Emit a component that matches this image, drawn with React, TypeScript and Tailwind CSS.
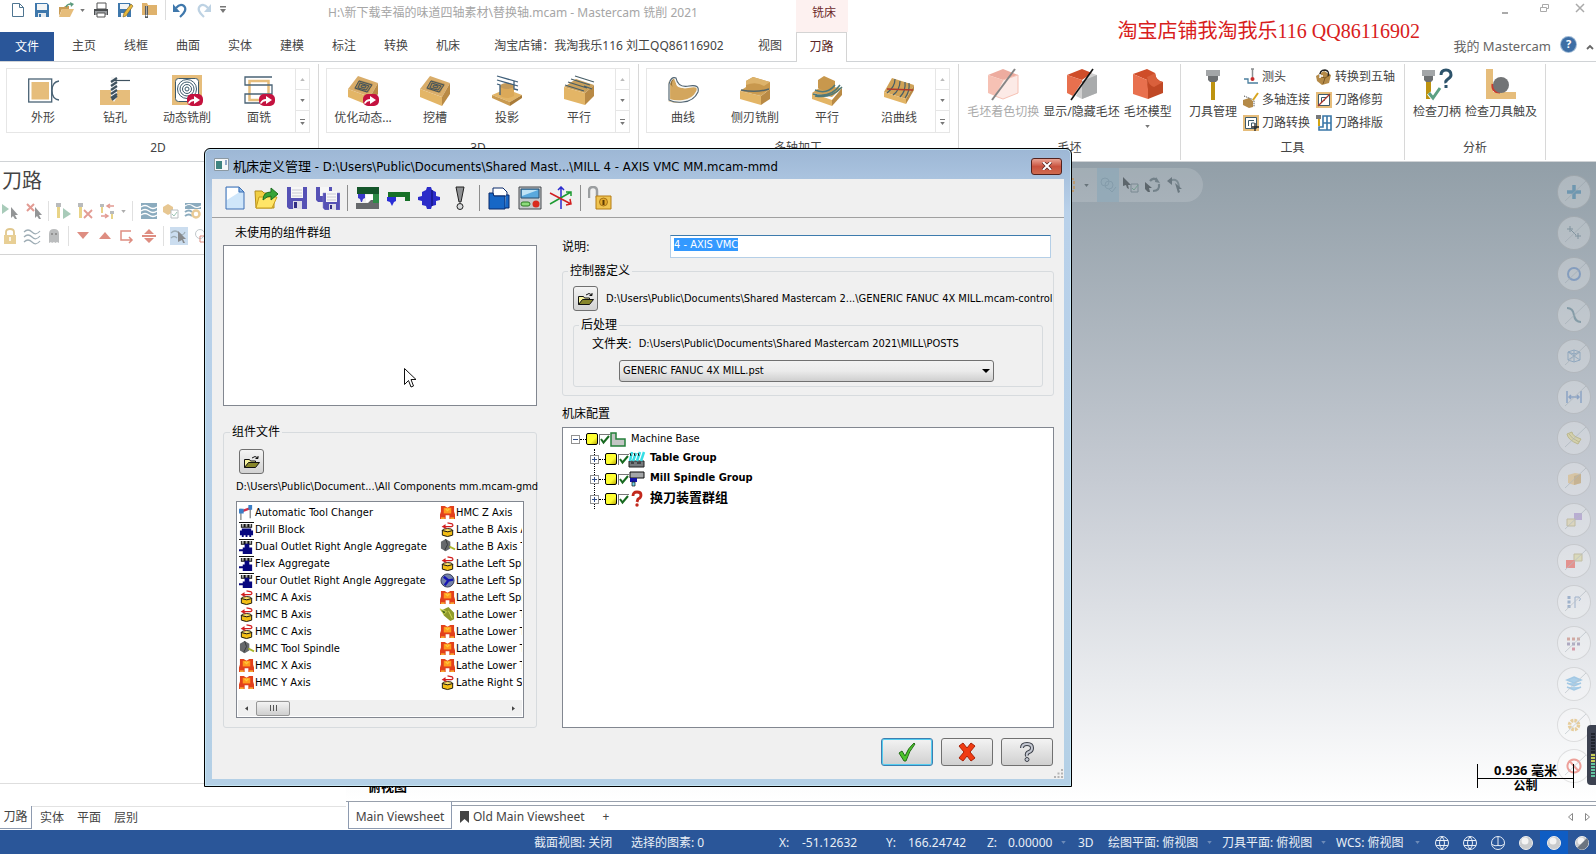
import { useEffect, useRef, useState } from "react";
import type { ReactNode } from "react";

type IconProps = { name: string; className?: string };

const redArrow = (
  <g>
    <rect x="15" y="19" width="16" height="12" rx="5" fill="#c4123f" />
    <path d="M16 28q2-4 6-4v-3l6 4-6 4v-3q-3 0-5 3z" fill="#fff" />
  </g>
);

const pocket = (
  <g>
    <path d="M10 1 30 8 22 22 0 14z" fill="#d9ad6a" />
    <path d="M0 14 22 22v9L0 22z" fill="#e3b566" />
    <path d="M22 22 30 8v11l-8 12z" fill="#b98a45" />
    <path d="M11 5 25 9l-5 9L6 14z" fill="#a8874f" />
    <g fill="none" stroke="#44545c">
      <path d="M11 6 24 10l-5 7L7 13z" />
      <path d="m12 8 9 3-3 4-8-2z" />
      <path d="m14 10 4 1-1 2-4-1z" />
    </g>
  </g>
);

// 30 x 30 drawings used by the ribbon
const largeIcons: Record<string, ReactNode> = {
  contour: (
    <g fill="none" stroke="#4a6375" strokeWidth="1.3">
      <rect x="0.7" y="4" width="23" height="23" />
      <rect x="3.5" y="7" width="17.5" height="17.5" fill="#e6bd7b" stroke="none" />
      <path d="M31 6q-7 1-7 9.5t7 9.5" />
    </g>
  ),
  drill: (
    <g>
      <path d="M0 15h30v15H0z" fill="#e6bd7b" />
      <path d="M11 2h6v20l-3 5-3-5z" fill="#f4f4f4" />
      <path d="m11 7 6-4m-6 8 6-4m-6 8 6-4m-6 8 6-4m-6 8 6-4M12 25l5-4" stroke="#3f5260" strokeWidth="2.2" />
      <path d="M14 5.5h16" stroke="#3f5260" strokeWidth="1.2" />
    </g>
  ),
  dynamic: (
    <g>
      <path d="M0 0h30v30H0z" fill="#e6bd7b" />
      <rect x="3.5" y="3.5" width="23" height="23" rx="3" fill="#fff" />
      <g fill="none" stroke="#3d5a6b">
        <circle cx="15" cy="14" r="2" />
        <circle cx="15" cy="14" r="4.5" />
        <circle cx="15" cy="14" r="7" />
        <circle cx="15" cy="14" r="9.5" />
        <rect x="3.5" y="3.5" width="23" height="23" rx="3" />
      </g>
      {redArrow}
    </g>
  ),
  face: (
    <g fill="none">
      <rect x="5.5" y="6" width="19" height="19" stroke="#e6bd7b" strokeWidth="2.5" />
      <path d="M28 2H1v8h27v9H1v9h15" stroke="#4a6375" strokeWidth="1.3" />
      {redArrow}
    </g>
  ),
  optirough: (
    <g>
      {pocket}
      {redArrow}
    </g>
  ),
  pocket,
  project: (
    <g>
      <path d="m0 20 14-6 16 6-12 7z" fill="#e3b566" />
      <path d="m0 20 18 7v4L0 23z" fill="#c99a50" />
      <path d="m18 27 12-7v3l-12 8z" fill="#a97b38" />
      <path d="M8 11q7-4 14 0v10q-7 4-14 0z" fill="#dba959" />
      <ellipse cx="15" cy="11" rx="7" ry="3" fill="#c39a5a" />
      <path d="m5 1 21 6M5 5l21 6M5 9l3 1v10m18-5-4-1V6" fill="none" stroke="#3f5f7a" strokeWidth="1.3" />
    </g>
  ),
  parallel: (
    <g>
      <path d="m0 12 12-8 18 6-9 8z" fill="#c9a05b" />
      <path d="m0 12 21 6v12L0 24z" fill="#e3b566" />
      <path d="m21 18 9-8v11l-9 9z" fill="#b98a45" />
      <path d="m1 10 19 6m-16-9 19 6m-16-9 19 6m-15-9 19 6m-10 4 8 3" stroke="#475e68" strokeWidth="1.2" />
    </g>
  ),
  curve: (
    <g>
      <path d="M0 8Q5-1 8 6q-1 9 11 6l9-1q4 9-8 14-11 5-20 1z" fill="#d3a65d" />
      <path d="M1 8Q2 2 7 3q-5 4-2 9z" fill="#94723a" />
      <path d="M1 9Q3 2 7 3q3 11 13 9 13-3 9 5-4 8-14 9-7 1-14-1z" fill="none" stroke="#f8f8f4" strokeWidth="2.2" />
      <path d="M1 9Q3 1 8 3q2 10 13 8 11-2 9 6-4 9-15 10-8 1-14-2z" fill="none" stroke="#4d6170" strokeWidth="1.1" />
    </g>
  ),
  swarf: (
    <g>
      <path d="m0 16 21 5v9L0 24z" fill="#e3b566" />
      <path d="m21 21 9-7v10l-9 6z" fill="#b98a45" />
      <path d="m0 16 6-4 24 2-9 7z" fill="#d0a257" />
      <path d="m6 6 7-4 17 5v7q-14 9-24 1z" fill="#c8984d" />
      <path d="m6 6 7-4 17 5-6 4Q16 6 6 10z" fill="#ddb36b" />
      <path d="M1 15q16 3 28-1" fill="none" stroke="#53656a" strokeWidth="1.5" />
    </g>
  ),
  multiparallel: (
    <g>
      <path d="m0 18 10-7 20 2-10 9z" fill="#d0a257" />
      <path d="m0 18 20 7v6L0 24z" fill="#e3b566" />
      <path d="m20 25 10-12v7L20 31z" fill="#b98a45" />
      <path d="m6 5 6-4 11 5v7q-8 5-17 0z" fill="#c8984d" />
      <path d="M3 15q12 5 20-5m-22 9q17 5 27-9m-25 11q16 3 27-9" fill="none" stroke="#4e7878" strokeWidth="1.5" />
    </g>
  ),
  alongcurve: (
    <g>
      <path d="M8 3 30 10 22 24 0 17z" fill="#d0a257" />
      <path d="m0 17 22 7v5L0 22z" fill="#e3b566" />
      <path d="m22 24 8-14v5l-8 14z" fill="#b98a45" />
      <path d="M11 4q0 8-8 14m13-12q0 9-7 14M21 7q1 9-5 15m9-14q1 8-4 15" fill="none" stroke="#475e68" strokeWidth="1.2" />
      <path d="m3 14 26 1" stroke="#b0392b" strokeWidth="1.3" />
    </g>
  ),
  shading: (
    <g opacity="0.55">
      <path d="M0 6 15 0l15 6-15 5z" fill="#df6a52" />
      <path d="M0 6v18l7 3 8-14V11z" fill="#f08f78" />
      <path d="m15 11 15-5v18l-15 6-8-3z" fill="#fbdad2" stroke="#f08f78" />
      <path d="M27 0 4 31" stroke="#222" strokeWidth="2" />
    </g>
  ),
  showstock: (
    <g>
      <path d="M0 6 15 0l10 4-10 7z" fill="#cf4d29" />
      <path d="M0 6v18l6 3 9-14V11z" fill="#e8704e" />
      <path d="m16 13 8-9 6 2v18l-15 6-6-3z" fill="#d0d0d0" />
      <path d="m15 12 15-6v18l-15 6z" fill="#a9abac" />
      <path d="M26 0 4 31" stroke="#111" strokeWidth="1.6" />
    </g>
  ),
  stockmodel: (
    <g>
      <path d="m0 5 14-5 8 4-8 7z" fill="#cf4d29" />
      <path d="m0 5 14 6q1 8 6 9l-5 10L0 25z" fill="#e8704e" />
      <path d="M14 8 22 4q1 8 8 9v11l-15 6V20q-1-4-1-12z" fill="#c04825" />
      <path d="m14 8 8-4q1 8 8 9l-9 5q-6-2-7-10z" fill="#d9603c" />
    </g>
  ),
  toolmanager: (
    <g>
      <path d="M8 1h14v6H8z" fill="#a3a6a8" />
      <path d="M10 7h10v4l-2 2h-6l-2-2z" fill="#6d7072" />
      <path d="M13 13h4v18h-4z" fill="#bd9310" />
    </g>
  ),
  checkholder: (
    <g>
      <path d="M0 1h13v6H0z" fill="#a3a6a8" />
      <path d="M2 7h9v4l-2 2H4l-2-2z" fill="#6d7072" />
      <path d="M4 13h5v17H4z" fill="#bd9310" />
      <path d="m7 24 4 5 7-10" fill="none" stroke="#fff" strokeWidth="5" />
      <path d="m7 24 4 5 7-10" fill="none" stroke="#5ba183" strokeWidth="3" />
      <path d="M19 6q0-5 5-5t5 5q0 2-3 4t-2 4m0 2v3" fill="none" stroke="#2d536b" strokeWidth="3" />
    </g>
  ),
  checkreach: (
    <g>
      <path d="M0 0h7v23h23v7H0z" fill="#e6bd7b" />
      <path d="M7 15q-1 8 7 8" fill="none" stroke="#c83b30" strokeWidth="3" />
      <circle cx="15" cy="16" r="8" fill="#727476" />
    </g>
  ),
};

// 16 x 16 drawings shared by the toolbars
const smallIcons: Record<string, ReactNode> = {
  new: <path d="M2.5 1.5h7l4 4v9h-11zM9.5 1.5v4h4" fill="#fff" stroke="#4f7591" />,
  save: (
    <g>
      <path d="M1 1h12l2 2v12H1z" fill="#3f78ac" />
      <path d="M3 2h10v6H3z" fill="#f3f5f6" />
      <path d="M4 11h8v4H4z" fill="#e8ecef" />
      <path d="M5 12h2v3H5z" fill="#3f78ac" />
    </g>
  ),
  open: (
    <g>
      <path d="M1 5h5l1-1h4v3h-7L1 14z" fill="#c99c55" />
      <path d="M4 7h12l-4 8H1z" fill="#e6bd7b" />
      <path d="M8 5q1-3 5-3" fill="none" stroke="#5b9a7d" strokeWidth="1.5" />
      <path d="m12 0 4 2-3 3z" fill="#5b9a7d" />
    </g>
  ),
  print: (
    <g>
      <path d="M4 1h9v6H4z" fill="#fff" stroke="#555" />
      <path d="M1 7h14v6H1z" fill="#4b4e50" />
      <path d="M2 9h12v4H2z" fill="#9a9da0" />
      <path d="M4 11h8v4H4z" fill="#fff" stroke="#555" />
    </g>
  ),
  saveas: (
    <g>
      <path d="M1 1h12l1 2v12H1z" fill="#3f78ac" />
      <path d="M3 2h9v5H3zM4 11h6v4H4z" fill="#f3f5f6" />
      <path d="m14 2 2 2-7 10-3 1 1-4z" fill="#e8b83c" stroke="#76602a" strokeWidth="0.6" />
    </g>
  ),
  zip: (
    <g>
      <path d="M1 1h5l1 2h9v10H1z" fill="#dfb26c" />
      <path d="M4 4h3v12H4z" fill="#55595c" />
      <path d="M5 5h1m-1 2h1m-1 2h1m-1 2h1" stroke="#fff" />
      <circle cx="5.5" cy="13.5" r="1" fill="#fff" />
    </g>
  ),
  undo: (
    <g>
      <path d="M4 6q4-5 8-2 4 4-4 11" fill="none" stroke="#3f78ac" strokeWidth="2.2" />
      <path d="M1 2v8h7z" fill="#3f78ac" />
    </g>
  ),
  redo: (
    <g opacity="0.45">
      <path d="M12 6Q8 1 4 4q-4 4 4 11" fill="none" stroke="#6f9cc2" strokeWidth="2.2" />
      <path d="M15 2v8H8z" fill="#6f9cc2" />
    </g>
  ),
  probe: (
    <g>
      <path d="M8 0h3M9.5 0v8" stroke="#8b8e90" strokeWidth="1.5" />
      <circle cx="9.5" cy="10" r="2" fill="#c62c2c" />
      <path d="M1 10h4v4h10" fill="none" stroke="#4b7f9f" strokeWidth="1.3" />
    </g>
  ),
  link: (
    <g>
      <path d="m0 8 6-2 4 3v6l-4 1-6-3z" fill="#b48a48" />
      <path d="m1 4 10 4v7" fill="none" stroke="#333" strokeDasharray="1 1" />
      <path d="m10 8 5-7" stroke="#d9a61f" strokeWidth="2" />
    </g>
  ),
  transform: (
    <g>
      <path d="M0 0h16v16H0z" fill="#e6bd7b" />
      <path d="M2.5 2.5h11v11h-11z" fill="#fff" stroke="#3d5a6b" />
      <path d="M11 5.5H5.5V11M8.5 11V8h3" fill="none" stroke="#3d5a6b" />
      <path d="M12 8v8M8 12h8" stroke="#222" strokeWidth="1.3" />
    </g>
  ),
  fiveaxis: (
    <g>
      <path d="m0 7 8-5 7 4-2 8-7 2-5-4z" fill="#b48a48" />
      <path d="m3 7 6 2 5-3M9 9l-2 6" fill="none" stroke="#7c5a25" />
      <path d="M4 8Q3 1 9 1q5 1 3 6" fill="none" stroke="#222" strokeWidth="1.3" />
      <path d="M4 5v4m0-2h3" stroke="#fff" strokeWidth="1.5" />
    </g>
  ),
  trim: (
    <g>
      <path d="M0 0h16v16H0z" fill="#e6bd7b" />
      <path d="M2.5 2.5h11v11h-11z" fill="#fff" stroke="#3d5a6b" />
      <path d="M5.5 11V5.5H11M8 9V8h1" fill="none" stroke="#3d5a6b" />
      <path d="m14 2-12 12" stroke="#a8352b" strokeWidth="1.3" />
    </g>
  ),
  nest: (
    <g>
      <path d="M0 0h5v4H0z" fill="#77797b" />
      <path d="M2 4h2v7H2z" fill="#d3a413" />
      <path d="M7 1h8v14H3v-3h4zM11 1v14M7 8h8" fill="none" stroke="#3a77a8" strokeWidth="1.6" />
    </g>
  ),
  pick: (
    <g>
      <path d="m0 1 7 5-7 5z" fill="#6fa98c" />
      <path d="m9 4 7 8-3 0 2 4-2 0-2-3-2 2z" fill="#4c4f52" />
    </g>
  ),
  unpick: (
    <g>
      <path d="m1 1 7 7m0-7-7 7" stroke="#d05a4c" strokeWidth="2" />
      <path d="m9 4 7 8-3 0 2 4-2 0-2-3-2 2z" fill="#4c4f52" />
    </g>
  ),
  regen: (
    <g>
      <path d="M1 0h5v4H1z" fill="#8b8e90" />
      <path d="M2 4h3v11H2z" fill="#dcb838" />
      <path d="m8 5 8 6-8 5z" fill="#6fa98c" />
    </g>
  ),
  regenx: (
    <g>
      <path d="M1 0h5v4H1z" fill="#8b8e90" />
      <path d="M2 4h3v11H2z" fill="#dcb838" />
      <path d="m7 7 8 8m0-8-8 8" stroke="#d05a4c" strokeWidth="1.8" />
    </g>
  ),
  swap: (
    <g>
      <path d="M1 1h4v3H1zM11 8h4v3h-4z" fill="#8b8e90" />
      <path d="M2 4h2v6H2zM12 11h2v5h-2z" fill="#dcb838" />
      <path d="M15 3H8m3-2L8 3l3 2M2 13h7m-3-2 3 2-3 2" fill="none" stroke="#d05a4c" strokeWidth="1.5" />
    </g>
  ),
  waves: (
    <g>
      <path d="M0 0h16v16H0z" fill="#3f7494" />
      <path d="M0 4q4-3 8 0t8 0M0 8q4-3 8 0t8 0M0 12q4-3 8 0t8 0" fill="none" stroke="#fff" strokeWidth="1.4" />
    </g>
  ),
  verify: (
    <g>
      <path d="m0 4 5-3 5 3v5l-5 3-5-3z" fill="#d8a34a" />
      <path d="M8 7h7v8H8z" fill="#fff" stroke="#8c9498" />
      <path d="m9 11 2 2 3-4" fill="none" stroke="#5ba183" />
    </g>
  ),
  post: (
    <g>
      <path d="M0 0h16v6H0z" fill="#3f7494" />
      <path d="M0 3q4-3 8 0t8 0" fill="none" stroke="#fff" strokeWidth="1.2" />
      <path d="M0 9q4-3 7 0M0 13q4-3 7 0" fill="none" stroke="#3f7494" strokeWidth="2" />
      <circle cx="11" cy="11" r="3.5" fill="none" stroke="#dba953" strokeWidth="2.5" />
    </g>
  ),
  lock: (
    <g>
      <path d="M4 8V4q0-3 4-3t4 3v4" fill="none" stroke="#cda343" strokeWidth="1.8" />
      <path d="M2 7h12v9H2z" fill="#d9b04f" />
      <path d="M8 9v4" stroke="#fff" strokeWidth="1.6" />
    </g>
  ),
  wavelines: <path d="M0 4q4-4 8 0t8-1M0 9q4-4 8 0t8-1M0 14q4-4 8 0t8-1" fill="none" stroke="#5e7684" strokeWidth="1.2" />,
  ghost: (
    <g>
      <path d="M3 15V6q0-5 5-5t5 5v9l-2-1-1.5 1L8 14l-2 1-1-1z" fill="#8f9294" />
      <circle cx="6" cy="6" r="1" fill="#333" />
      <circle cx="10" cy="6" r="1" fill="#333" />
    </g>
  ),
  down: <path d="M2 4h12l-6 7z" fill="#c9432f" />,
  up: <path d="m8 4 6 7H2z" fill="#c9432f" />,
  insert: <path d="M12 3H2v9h11m-3-3 3 3-3 3" fill="none" stroke="#c9432f" strokeWidth="1.5" />,
  center: <path d="m8 1 5 5H3zM1 7h14v2H1zm2 3h10l-5 5z" fill="#c9432f" />,
  display: (
    <g>
      <path d="M0 5q4-4 8 0t6-1M0 10q3-3 6 0" fill="none" stroke="#5e7684" strokeWidth="1.2" />
      <path d="m7 3 8 8-3 0 2 4-2 0-1-3-4 2z" fill="#3a3d40" />
    </g>
  ),
  shape: (
    <g fill="none">
      <circle cx="6" cy="6" r="4.5" stroke="#9aa5ab" />
      <path d="M6 8h8v6H6z" stroke="#c9432f" />
    </g>
  ),
  marquee: <path d="M1 2h13v12H1z" fill="none" stroke="#c79a62" strokeWidth="2" strokeDasharray="3 2" />,
  solids: (
    <g fill="none" stroke="#7f9bab">
      <circle cx="5" cy="5" r="4" />
      <circle cx="9" cy="8" r="4" />
      <path d="m9 12 3 3 4-5" />
    </g>
  ),
  validate: (
    <g>
      <path d="m0 0 8 8H5l1 4-2-1-1-3-3 1z" fill="#4a5358" />
      <path d="M8 7h7v8H8z" fill="none" stroke="#71808a" />
      <path d="m9 11 2 2 4-5" fill="none" stroke="#6b9b88" />
    </g>
  ),
  cycle: (
    <g>
      <path d="M5 4q3-4 7-1m2 4q1 7-6 7" fill="none" stroke="#68777f" strokeWidth="2.2" />
      <path d="m11 0 4 6-5-1z" fill="#68777f" />
      <path d="m0 5 7 6H4l1 4H3l-3-3z" fill="#4a5358" />
    </g>
  ),
  back: (
    <g>
      <path d="M3 4q8-4 9 6" fill="none" stroke="#74848c" strokeWidth="2" />
      <path d="M5 0v8L0 4zM8 6l7 6-3 0 1 3-2 1z" fill="#5c6a72" />
    </g>
  ),
};

// 24 x 24 drawings of the dialog toolbar
const dialogIcons: Record<string, ReactNode> = {
  page: (
    <g>
      <path d="M3 1h13l5 5v17H3z" fill="#cfe6fa" stroke="#3c6fb4" />
      <path d="M4 2h11v5L4 14z" fill="#fff" />
      <path d="M16 1v5h5z" fill="#8db9e8" stroke="#3c6fb4" />
    </g>
  ),
  folder: (
    <g>
      <path d="M1 5h7l2 2h10v15H2z" fill="#f1cf43" stroke="#b48d1b" />
      <path d="M5 11h18l-5 11H2z" fill="#ffe567" stroke="#c89d1c" />
      <path d="M9 14q0-8 8-8V2l7 6-7 6v-4q-4 0-8 4z" fill="#37a437" stroke="#1a6d1e" />
    </g>
  ),
  disk: (
    <g>
      <path d="M2 1h20v22H4l-2-2z" fill="#5551b5" />
      <path d="M6 1h12v11H6z" fill="#f7f7f7" />
      <path d="M7 4h10M7 7h10M7 10h10" stroke="#c9c9d4" />
      <path d="M8 15h9v8H8z" fill="#dcdce8" />
      <path d="M9 16h3v6H9z" fill="#312d85" />
    </g>
  ),
  disks: (
    <g>
      <path d="M0 1h16v15H2l-2-2z" fill="#5551b5" />
      <path d="M4 1h9v9H4z" fill="#f7f7f7" />
      <path d="M7 7h17v17H9l-2-2z" fill="#5551b5" stroke="#8885d2" strokeWidth="0.5" />
      <path d="M10 5h11v11H10z" fill="#f7f7f7" />
      <path d="M11 8h9m-9 3h9m-9 3h9" stroke="#c9c9d4" />
      <path d="M13 18h7v6h-7z" fill="#dcdce8" />
      <path d="M14 19h2v4h-2z" fill="#312d85" />
    </g>
  ),
  mill: (
    <g>
      <path d="M2 1h22v16h-6V8H2z" fill="#14562a" />
      <path d="M18 8h6v9h-6z" fill="#2c8a45" />
      <path d="M3 8h7v4l-2 1-1 3H6l-1-3-2-1z" fill="#3a39c9" />
      <path d="M1 17h12l3-3h2v3h6v6H1z" fill="#66696b" />
      <path d="M11 9h7v5h-3l-2 2h-2z" fill="#fff" />
    </g>
  ),
  head: (
    <g>
      <path d="M2 6h22v9h-5v-4H2z" fill="#167027" />
      <path d="M1 11h9v4l-2 1-2 4-2-4-3-1z" fill="#2a2ed6" />
    </g>
  ),
  spindle: (
    <g>
      <path d="M10 1h4l1 3 4 2v4l4 1v3l-4 1v4l-4 1-1 3h-4l-1-3-4-1v-4l-4-1v-3l4-1V6l4-2z" fill="#2b2cc9" />
      <path d="M15 4v16" stroke="#171788" strokeWidth="1.5" />
    </g>
  ),
  exclaim: (
    <g fill="#8f9193" stroke="#222">
      <path d="M8 1h8l-3 15h-2z" />
      <circle cx="12" cy="20.5" r="3" fill="#d8dadb" />
    </g>
  ),
  tools: (
    <g>
      <path d="M6 2h10l4 4v4H6z" fill="#fff" stroke="#0b2a6b" />
      <path d="M2 7h4l1 3h11v13H2z" fill="#1767c6" stroke="#0b2a6b" />
      <path d="M19 9h3v13h-4" fill="#1767c6" stroke="#0b2a6b" />
    </g>
  ),
  control: (
    <g>
      <path d="M1 1h22v22H1z" fill="#c6c9cc" stroke="#44484c" />
      <path d="M3 3h18v9H3z" fill="#5aa9dd" stroke="#274c6d" />
      <path d="M4 4h16L4 10z" fill="#bfe3f5" />
      <rect x="3" y="16" width="9" height="4" rx="2" fill="#8ddc7c" stroke="#2e7a24" />
      <circle cx="18" cy="18" r="3.5" fill="#d92a1c" />
    </g>
  ),
  axes: (
    <g fill="none" strokeWidth="1.5">
      <path d="M12 23V1M9 4l3-3 3 3" stroke="#2b2ccf" />
      <path d="M1 18 22 6m-5 0h5v4" stroke="#1d9a32" />
      <path d="m1 7 21 11m-5 1 5-1-1-5" stroke="#d22020" />
    </g>
  ),
  unlock: (
    <g>
      <path d="M1 12V5q0-4 4-4t4 4v7" fill="none" stroke="#9b9ea0" strokeWidth="2.5" />
      <path d="M8 10h15v13H8z" fill="#f0c552" stroke="#b57c15" />
      <circle cx="15.5" cy="16" r="4" fill="#e2a92c" stroke="#a8741a" />
      <path d="M15.5 14v5" stroke="#5b3a05" strokeWidth="2" />
    </g>
  ),
};

// 16 x 16 drawings of the component list and the machine tree
const partIcons: Record<string, ReactNode> = {
  changer: (
    <g>
      <path d="M2 4v12M12 3v11" stroke="#8b8e90" strokeWidth="1.5" />
      <path d="m2 7 11-4" stroke="#d12f4a" strokeWidth="2.5" />
      <path d="M0 4h5v5H0zM10 0h4v5h-4z" fill="#3c7fc7" />
    </g>
  ),
  block: (
    <g>
      <path d="M0 0h16v1H0zM2 2h12v4H2z" fill="#111" />
      <path d="M3 2h2v3H3zm4 0h2v3H7zm4 0h2v3h-2z" fill="#aaa" />
      <path d="M3 7h10v2h2v5h-2v2h-2v-2H9v2H7v-2H5v2H3v-2H1V9h2z" fill="#06067e" />
    </g>
  ),
  aggregate: (
    <g>
      <path d="M0 0h16v1H0zM2 2h12v4H2z" fill="#111" />
      <path d="M3 2h2v3H3zm4 0h2v3H7zm4 0h2v3h-2z" fill="#aaa" />
      <path d="M6 5h5v4h3v7H4v-3H0v-2h4V9h2z" fill="#06067e" />
    </g>
  ),
  rotary: (
    <g>
      <ellipse cx="8" cy="9" rx="5.5" ry="2" fill="#ffe36a" stroke="#111" />
      <path d="M2.5 9v5q5.5 3 11 0V9q-5 3-11 0z" fill="#f2bd15" stroke="#111" />
      <path d="M4 5h8q3-1 1-3L8 1M6 3 3 5l4 2" fill="none" stroke="#d21e1e" strokeWidth="1.3" />
    </g>
  ),
  toolspindle: (
    <g>
      <path d="m1 3 5-3 5 3v7l-5 3-5-3z" fill="#66696c" />
      <path d="m6 0 2 6-3 6" fill="none" stroke="#34373a" />
      <path d="m10 8 6 3" stroke="#a9b62a" strokeWidth="2" />
    </g>
  ),
  linear: (
    <g>
      <path d="M1 1h4l3 2 3-2h4v6l1 3v5h-6v-4H6v4H0v-5l1-3z" fill="#e2401c" />
      <path d="M4 3h8v6H4z" fill="#ff9a1e" />
      <path d="m6 4 2 2 2-2M1 14h4m6 0h4" stroke="#ffc93a" strokeWidth="1.5" fill="none" />
    </g>
  ),
  chuck: (
    <g>
      <circle cx="8" cy="8" r="7" fill="#7381a8" stroke="#333a52" />
      <path d="m4 4 5 4 5-1M9 8l-4 5" stroke="#1414b4" strokeWidth="2.5" fill="none" />
    </g>
  ),
  turret: (
    <g>
      <path d="m3 3 6-3 6 6v7l-4 2-7-6z" fill="#8e9a2a" />
      <path d="m0 2 7 3-3 3zM9 4l4 8" fill="#4f6d22" stroke="#d6dd53" />
    </g>
  ),
  base: <path d="M1 2h5v6h9v7H1z" fill="#c3c6c4" stroke="#25803a" strokeWidth="1.5" />,
  table: (
    <g>
      <path d="M0 10h15v6H0z" fill="#777b7e" stroke="#222" />
      <path d="m3 1-2 9m6-8-3 8m7-9-3 9m7-9-3 9" stroke="#37dfe6" strokeWidth="2.5" />
      <path d="m1 2 1 3m3-3 1 3m3-3 1 3M2 12h3m3 0h4" stroke="#111" />
    </g>
  ),
  millhead: (
    <g>
      <path d="M1 1h14v6H1z" fill="#a4a6a8" stroke="#111" />
      <path d="M1 7h7v4H1z" fill="#1414a8" />
      <path d="M3 11h3v4H3z" fill="#6fd3ea" stroke="#111" strokeWidth="0.7" />
    </g>
  ),
  question: (
    <g>
      <path d="M4 5q0-4 4-4t4 3q0 3-3 4l-1 3" fill="none" stroke="#c2281c" strokeWidth="2.8" />
      <circle cx="8" cy="14" r="1.7" fill="#c2281c" />
    </g>
  ),
};

function LargeIcon({ name, className = "size-[30px]" }: IconProps) {
  return <svg viewBox="0 0 30 30" className={`overflow-visible ${className}`}>{largeIcons[name]}</svg>;
}

function SmallIcon({ name, className = "size-4" }: IconProps) {
  return <svg viewBox="0 0 16 16" className={`shrink-0 overflow-visible ${className}`}>{smallIcons[name] ?? partIcons[name]}</svg>;
}

function Caret({ className = "" }: { className?: string }) {
  return (
    <svg viewBox="0 0 6 4" className={`h-[3px] w-[5px] shrink-0 ${className}`}>
      <path d="M0 0h6L3 4z" fill="currentColor" />
    </svg>
  );
}

const tabs = ["主页", "线框", "曲面", "实体", "建模", "标注", "转换", "机床"];

const galleries = [
  { title: "2D", items: [["contour", "外形"], ["drill", "钻孔"], ["dynamic", "动态铣削"], ["face", "面铣"]] },
  { title: "3D", items: [["optirough", "优化动态..."], ["pocket", "挖槽"], ["project", "投影"], ["parallel", "平行"]] },
  { title: "多轴加工", items: [["curve", "曲线"], ["swarf", "侧刃铣削"], ["multiparallel", "平行"], ["alongcurve", "沿曲线"]] },
];

const utilities = [
  ["probe", "测头"], ["link", "多轴连接"], ["transform", "刀路转换"],
  ["fiveaxis", "转换到五轴"], ["trim", "刀路修剪"], ["nest", "刀路排版"],
];

const components = [
  ["changer", "Automatic Tool Changer"],
  ["block", "Drill Block"],
  ["aggregate", "Dual Outlet Right Angle Aggregate"],
  ["aggregate", "Flex Aggregate"],
  ["aggregate", "Four Outlet Right Angle Aggregate"],
  ["rotary", "HMC A Axis"],
  ["rotary", "HMC B Axis"],
  ["rotary", "HMC C Axis"],
  ["toolspindle", "HMC Tool Spindle"],
  ["linear", "HMC X Axis"],
  ["linear", "HMC Y Axis"],
  ["linear", "HMC Z Axis"],
  ["rotary", "Lathe B Axis Attachment"],
  ["toolspindle", "Lathe B Axis Tool Spindle"],
  ["rotary", "Lathe Left Spindle C"],
  ["chuck", "Lathe Left Spindle Chuck"],
  ["linear", "Lathe Left Spindle Slide"],
  ["turret", "Lathe Lower Turret"],
  ["linear", "Lathe Lower Turret X"],
  ["linear", "Lathe Lower Turret Y"],
  ["linear", "Lathe Lower Turret Z"],
  ["rotary", "Lathe Right Spindle C"],
];

const machineGroups = [
  { icon: "table", name: "Table Group" },
  { icon: "millhead", name: "Mill Spindle Group" },
  { icon: "question", name: "换刀装置群组", size: "text-[13px]" },
];

function TitleBar() {
  return (
    <div className="flex h-8 items-start text-[#a6a6a6]">
      <div className="flex w-[328px] shrink-0 items-center pl-2.5 text-[#777]">
        <SmallIcon name="new" />
        <SmallIcon name="save" className="ml-2 size-4" />
        <SmallIcon name="open" className="ml-2 size-4" />
        <Caret className="ml-1.5" />
        <SmallIcon name="print" className="ml-2 size-4" />
        <SmallIcon name="saveas" className="ml-2 size-4" />
        <SmallIcon name="zip" className="ml-2 size-4" />
        <span className="ml-2 h-5 w-px bg-[#ddd]" />
        <SmallIcon name="undo" className="ml-1.5 size-4" />
        <SmallIcon name="redo" className="ml-2 size-4" />
        <svg viewBox="0 0 6 8" className="ml-2 h-2 w-1.5">
          <path d="M0 0h6v1.5H0zM0 3h6L3 7z" fill="currentColor" />
        </svg>
      </div>
      <h1 className="w-[468px] shrink-0 whitespace-nowrap pt-1 text-xs leading-[18px]">
        H:\新下载幸福的味道四轴素材\替换轴.mcam - Mastercam 铣削 2021
      </h1>
      <div className="h-8 w-[52px] shrink-0 bg-[#fdf1f0] pl-1 pt-1 text-center text-xs leading-[18px] text-[#6e2a2a]">铣床</div>
      <div className="ml-auto flex items-center gap-6 pr-2.5 pt-0.5">
        <button aria-label="最小化" className="flex size-3 items-end">
          <span className="h-0.5 w-1.5 bg-[#aaa]" />
        </button>
        <button aria-label="还原">
          <svg viewBox="0 0 12 12" className="size-3" fill="none" stroke="#aaa">
            <path d="M2.5 5.5h6v4h-6zM4.5 5V2.5h6v4H9" />
          </svg>
        </button>
        <button aria-label="关闭程序">
          <svg viewBox="0 0 12 12" className="size-3" stroke="#aaa" strokeWidth="1.5">
            <path d="m2 2 8 8m0-8-8 8" />
          </svg>
        </button>
      </div>
    </div>
  );
}

function TabRow() {
  return (
    <div className="flex h-[29px] text-xs text-[#444]">
      <button className="mr-1 w-[54px] bg-[#2a5699] text-white">文件</button>
      {tabs.map((tab) => (
        <button key={tab} className="w-[52px] pb-0.5">{tab}</button>
      ))}
      <button className="w-[270px] whitespace-nowrap pb-0.5">淘宝店铺：我淘我乐116 刘工QQ86116902</button>
      <button className="w-[52px] pb-0.5">视图</button>
      <button className="relative -mb-px w-[51px] border border-b-0 border-[#d4d4d4] bg-white pb-0.5 text-[#5c2626]">刀路</button>
      <div className="ml-auto flex items-center gap-2.5 pr-0.5 text-[#666]">
        <a href="#my" className="text-[13px]">我的 Mastercam</a>
        <button aria-label="帮助" className="mb-1 flex size-[15px] items-center justify-center rounded-full bg-[#3d6ea5] text-[11px] font-bold text-white ring-1 ring-[#9db8d4]">?</button>
        <svg viewBox="0 0 8 6" className="h-1.5 w-2" fill="none" stroke="#666" strokeWidth="1.8">
          <path d="m1 5 3-3 3 3" />
        </svg>
      </div>
    </div>
  );
}

function RibbonButton({ icon, label, className = "" }: { icon: string; label: string; className?: string }) {
  return (
    <button className={`flex flex-col items-center whitespace-nowrap ${className}`}>
      <LargeIcon name={icon} />
      <span className="mt-1 leading-[18px]">{label}</span>
    </button>
  );
}

function Ribbon() {
  return (
    <div className="flex h-[101px] shrink-0 border-y border-[#d0d3d6] pt-0.5 text-xs text-[#444]">
      {galleries.map((group) => (
        <section key={group.title} className="flex h-24 w-[319px] shrink-0 flex-col border-r border-[#d8d8d8] pl-1.5 pr-2 pt-1 not-first:w-[320px] not-first:pl-[7px]">
          <div className="flex h-[65px] border border-[#e6e6e6]">
            {group.items.map(([icon, label]) => (
              <RibbonButton key={label} icon={icon} label={label} className="w-[72px] pt-1.5" />
            ))}
            <div className="ml-auto grid w-[14px] grid-rows-3 divide-y divide-[#e6e6e6] border-l border-[#e6e6e6] text-[#777]">
              <button aria-label="上移" className="flex items-center justify-center"><Caret className="rotate-180 text-[#bbb]" /></button>
              <button aria-label="下移" className="flex items-center justify-center"><Caret /></button>
              <button aria-label="展开" className="flex flex-col items-center justify-center gap-0.5"><span className="h-px w-[5px] bg-[#777]" /><Caret /></button>
            </div>
          </div>
          <h2 className="mt-[7px] text-center leading-4">{group.title}</h2>
        </section>
      ))}

      <section className="flex h-24 w-[222px] shrink-0 flex-col border-r border-[#d8d8d8] pt-[5px]">
        <div className="flex h-[71px] justify-center gap-1">
          <RibbonButton icon="shading" label="毛坯着色切换" className="text-[#aaa]" />
          <RibbonButton icon="showstock" label="显示/隐藏毛坯" />
          <div className="flex flex-col items-center text-[#777]">
            <RibbonButton icon="stockmodel" label="毛坯模型" className="text-[#444]" />
            <Caret className="mt-1" />
          </div>
        </div>
        <h2 className="text-center leading-4">毛坯</h2>
      </section>

      <section className="flex h-24 w-[224px] shrink-0 flex-col border-r border-[#d8d8d8] pt-[5px]">
        <div className="flex h-[71px] gap-1.5 pl-2">
          <RibbonButton icon="toolmanager" label="刀具管理" className="h-fit" />
          <div className="-mt-1 grid h-[69px] grid-flow-col grid-rows-3 gap-x-1.5 whitespace-nowrap">
            {utilities.map(([icon, label]) => (
              <button key={label} className="flex items-center gap-[3px]">
                <SmallIcon name={icon} />
                {label}
              </button>
            ))}
          </div>
        </div>
        <h2 className="text-center leading-4">工具</h2>
      </section>

      <section className="flex h-24 w-[141px] shrink-0 flex-col border-r border-[#d8d8d8] pt-[5px]">
        <div className="flex h-[71px] justify-center gap-1">
          <RibbonButton icon="checkholder" label="检查刀柄" />
          <RibbonButton icon="checkreach" label="检查刀具触及" />
        </div>
        <h2 className="text-center leading-4">分析</h2>
      </section>
    </div>
  );
}

function Divider() {
  return <span className="h-5 w-px shrink-0 bg-[#ccc]" />;
}

function ToolpathPanel() {
  return (
    <aside className="flex w-[346px] shrink-0 flex-col overflow-hidden bg-white">
      <h2 className="px-0.5 pt-1 text-xl leading-[30px] text-[#444]">刀路</h2>
      <div className="flex h-[59px] flex-col gap-[7px] border-b border-[#d4d4d4] pt-1.5">
        <div className="flex h-[18px] items-center gap-1.5 pl-0.5 opacity-60">
          <SmallIcon name="pick" />
          <SmallIcon name="unpick" className="ml-0.5 size-4" />
          <Divider />
          <SmallIcon name="regen" />
          <SmallIcon name="regenx" />
          <SmallIcon name="swap" />
          <Caret className="text-[#777]" />
          <Divider />
          <SmallIcon name="waves" className="ml-0.5 size-4" />
          <SmallIcon name="verify" />
          <SmallIcon name="post" />
        </div>
        <div className="flex h-[18px] items-center gap-1.5 pl-0.5 opacity-60">
          <SmallIcon name="lock" />
          <SmallIcon name="wavelines" />
          <SmallIcon name="ghost" />
          <Divider />
          <SmallIcon name="down" />
          <SmallIcon name="up" />
          <SmallIcon name="insert" />
          <SmallIcon name="center" />
          <Divider />
          <span className="bg-[#a9c8e6] p-px">
            <SmallIcon name="display" />
          </span>
          <SmallIcon name="shape" />
        </div>
      </div>
      <div className="flex-1 border-b border-[#dedede]" />
      <nav className="mt-[22px] flex h-6 text-xs text-[#444]">
        <button className="mb-px w-8 border-b border-r border-[#8e9bb0]">刀路</button>
        <div className="flex flex-1 gap-[13px] border-t border-[#e2e2e2] pb-0.5 pl-2">
          <button>实体</button>
          <button>平面</button>
          <button>层别</button>
        </div>
      </nav>
    </aside>
  );
}

// glyphs of the round quick-mask buttons, 16 x 16
const masks: ReactNode[] = [
  <path d="M8 1v14M1 8h14" stroke="#2f76a0" strokeWidth="3.5" />,
  <path d="M4 1v6M1 4h6m5 4v6m-3-3h6M5 5l5 5" stroke="#4d6a7a" />,
  <circle cx="8" cy="8" r="6" stroke="#4f79b5" strokeWidth="2" />,
  <path d="M1 1q6 0 7 7t7 7" stroke="#4a7282" strokeWidth="2" />,
  <path d="m2 4 6-2 6 2v8l-6 2-6-2zm0 0 6 2 6-2M8 2v12M2 12l12-8M2 4l12 8" stroke="#5f87ad" />,
  <path d="M1 2v12M15 2v12M3 8h10M5 6 3 8l2 2m6-4 2 2-2 2" stroke="#4f79b5" strokeWidth="1.5" />,
  <path d="m1 4 5-2q0 4 9 7l-3 5Q2 10 1 4zm2 0q2 4 10 8" fill="#d9cf7d" stroke="#a89c45" />,
  <g><path d="m2 4 7-2 6 1v9l-7 2-6-2z" fill="#d9b26d" /><path d="m8 5 7-2v9l-7 2z" fill="#b98f4a" /></g>,
  <g><path d="M8 1h8v7H8z" fill="#9a7fc4" /><path d="M1 7h8v7H1z" fill="#dccf9b" stroke="#a89c65" /></g>,
  <g><path d="M8 1h8v7H8z" fill="#d6d292" stroke="#a89c65" /><path d="M0 7h9v8H0z" fill="#e8453a" /></g>,
  <g stroke="#5b7fae"><path d="M3 2v12" strokeDasharray="3 1.5" strokeWidth="3" /><path d="M9 14V3h4q3 2 0 4" /></g>,
  <g strokeWidth="3" strokeDasharray="3 2"><path d="M1 4h14" stroke="#bb6a5a" /><path d="M1 9h14" stroke="#736a95" /><path d="M6 14h3" stroke="#c25068" /></g>,
  <path d="m8 1 7 3-7 3-7-3zM1 7l7 3 7-3M1 11l7 3 7-3" fill="#6cb0e0" stroke="#58a2d8" strokeWidth="1.5" />,
  <circle cx="8" cy="8" r="4.5" stroke="#d9a644" strokeWidth="3.5" strokeDasharray="2.5 1" />,
  <path d="M8 1.5a6.5 6.5 0 1 0 .01 0zM4 3.5l8 9" stroke="#e2483b" strokeWidth="2" />,
];

function Viewport() {
  return (
    <main className="flex min-w-0 flex-1 flex-col">
      <div className="relative flex flex-1 justify-end bg-linear-to-b from-[#929fa8] via-[#c6cbd3] to-white">
        <div className="absolute left-[500px] top-1.5 flex h-[34px] w-[357px] items-center justify-end rounded-r-full bg-white/20 pr-5 text-[#59656c] opacity-75">
          <SmallIcon name="marquee" />
          <Caret className="mx-2" />
          <span className="flex h-full w-[22px] items-center justify-center bg-[#93adbc]">
            <SmallIcon name="solids" />
          </span>
          <SmallIcon name="validate" className="ml-1 size-4" />
          <SmallIcon name="cycle" className="ml-1.5 size-4" />
          <SmallIcon name="back" className="ml-1.5 size-4" />
        </div>
        <div className="absolute bottom-1.5 left-[22px] text-[13px] font-bold leading-[18px] text-black">俯视图</div>

        <div className="flex w-[39px] flex-col gap-[7px] pt-[13px]">
          {masks.map((mask, i) => (
            <button key={i} aria-label={`快速遮罩 ${i + 1}`} className="flex size-[34px] items-center justify-center rounded-full border border-black/10 bg-white/25">
              <svg viewBox="0 0 16 16" className="size-4 overflow-visible opacity-50" fill="none">
                {mask}
                <path d="M-1 17 20-3" stroke="#8c9aa2" strokeWidth="0.7" />
              </svg>
            </button>
          ))}
        </div>

        <div className="absolute bottom-2 right-[22px] w-[97px] text-center text-[13px] font-bold leading-4 text-black">
          <div className="relative border-b border-black before:absolute before:left-0 before:top-0.5 before:h-6 before:w-px before:bg-black after:absolute after:right-0 after:top-0.5 after:h-6 after:w-px after:bg-black">
            0.936 毫米
          </div>
          <div className="text-xs leading-[14px]">公制</div>
        </div>

        <div className="absolute bottom-4 right-0 flex h-[60px] w-[9px] flex-col gap-px rounded-l bg-[#3c4150] py-2 pl-1">
          {[...Array(15)].map((_, i) => (
            <span key={i} className={`h-0.5 w-1 ${i < 7 ? "bg-[#20242e]" : i < 10 ? "bg-[#c9cf5a]" : "bg-[#62c3a0]"}`} />
          ))}
        </div>
      </div>

      <nav className="flex h-[29px] border-t border-[#98a0ac] bg-white pl-0.5 text-xs text-[#444]">
        <button className="mb-px w-[104px] shrink-0 border border-t-0 border-[#8e9bb0] pt-1">Main Viewsheet</button>
        <div className="mt-[3px] flex flex-1 items-center border-t border-[#98a0ac] pb-0.5 pl-2">
          <button className="flex items-center gap-1">
            <svg viewBox="0 0 9 12" className="h-3 w-[9px]"><path d="M0 0h9v12L4.5 8 0 12z" fill="#444" /></svg>
            Old Main Viewsheet
          </button>
          <button aria-label="新建视图" className="ml-[18px]">+</button>
          <svg viewBox="0 0 22 8" className="ml-auto mr-1.5 h-2 w-[22px]" fill="none" stroke="#888">
            <path d="M4.5.5v7l-4-3.5zM17.5.5v7l4-3.5z" />
          </svg>
        </div>
      </nav>
    </main>
  );
}

function StatusBar() {
  return (
    <footer className="flex h-6 shrink-0 items-center whitespace-nowrap bg-[#2a5699] pt-px text-xs text-[#e8eef6]">
      <span className="ml-[534px] w-[97px]">截面视图: 关闭</span>
      <span className="w-[148px]">选择的图素: 0</span>
      <span className="w-[23px]">X:</span>
      <span className="w-[84px]">-51.12632</span>
      <span className="w-[22px]">Y:</span>
      <span className="w-[79px]">166.24742</span>
      <span className="w-[21px]">Z:</span>
      <span className="w-[53px]">0.00000</span>
      <Caret className="text-[#6d8bb8]" />
      <button className="ml-3 w-[30px] text-left">3D</button>
      <button className="w-[99px] text-left">绘图平面: 俯视图</button>
      <Caret className="text-[#6d8bb8]" />
      <button className="ml-2.5 w-[99px] text-left">刀具平面: 俯视图</button>
      <Caret className="text-[#6d8bb8]" />
      <button className="ml-2.5 w-[79px] text-left">WCS: 俯视图</button>
      <Caret className="text-[#6d8bb8]" />
      <div className="ml-auto flex h-full">
        {["wire", "hidden", "dim", "shade", "outline", "split"].map((mode) => (
          <button key={mode} aria-label={mode} className={`flex w-7 items-center justify-center ${mode === "outline" ? "bg-[#0f5dc4]" : ""}`}>
            <svg viewBox="0 0 16 16" className="size-4" fill="none" stroke="#e8eef6">
              {["wire", "hidden", "dim"].includes(mode) ? (
                <>
                  <circle cx="8" cy="8" r="6.5" />
                  {mode !== "dim" && <path d="M2 5.5h12M2 10.5h12" />}
                  <path d={mode === "dim" ? "M8 1.5v9q-3 1-6-1m6 1q3 1 6-1" : "M8 1.5q-5 6.5 0 13m0-13q5 6.5 0 13"} />
                </>
              ) : (
                <>
                  <circle cx="8" cy="8" r="6.5" fill="#c9cbcd" stroke="#eee" />
                  <circle cx="7" cy="6" r="3.5" fill="#f4f4f4" stroke="none" />
                  {mode === "split" && <path d="M13 3 3 13q6 4 10-1 3-5 0-9z" fill="#6b7480" stroke="none" />}
                </>
              )}
            </svg>
          </button>
        ))}
      </div>
    </footer>
  );
}

function FolderButton({ label }: { label: string }) {
  return (
    <button aria-label={label} className="flex size-[25px] shrink-0 items-center justify-center rounded-[3px] border border-[#707070] bg-linear-to-b from-[#f4f4f4] to-[#d2d2d2]">
      <svg viewBox="0 0 16 14" className="h-3.5 w-4" stroke="#111">
        <path d="M.5 12.5v-8h5l1 1.5h5v2" fill="#f6f3a0" />
        <path d="m.5 12.5 4-5h11l-4 5z" fill="#87862a" />
        <path d="M8 3q3-3 6 0m0-2v2.5h-2.5" fill="none" />
      </svg>
    </button>
  );
}

function TreeCheckbox({ label }: { label: string }) {
  const [checked, setChecked] = useState(true);
  return (
    <span className="grid size-[11px] shrink-0">
      <input
        type="checkbox"
        aria-label={label}
        checked={checked}
        onChange={() => setChecked(!checked)}
        className="col-start-1 row-start-1 size-[11px] appearance-none border-l border-t border-[#777] bg-white"
      />
      {checked && (
        <svg viewBox="0 0 11 11" className="pointer-events-none col-start-1 row-start-1 size-[11px]" fill="none" stroke="#17691f" strokeWidth="2">
          <path d="m2 5 2.5 3.5L10 2" />
        </svg>
      )}
    </span>
  );
}

function TreeNode({ icon, name, open = false, size = "text-[11px]" }: { icon: string; name: string; open?: boolean; size?: string }) {
  return (
    <div className={`flex h-5 items-center ${open ? "" : "font-bold"}`}>
      <button aria-label={open ? "折叠" : "展开"} className="flex size-[9px] shrink-0 items-center justify-center border border-[#919191] bg-white">
        <svg viewBox="0 0 5 5" className="size-[5px]" stroke="#34508a">
          <path d={open ? "M0 2.5h5" : "M0 2.5h5M2.5 0v5"} />
        </svg>
      </button>
      <span className="w-1.5 shrink-0 border-t border-dotted border-black" />
      <span className="mr-px size-3 shrink-0 rounded-[2px] border border-black bg-linear-to-br from-[#ffff30] from-60% to-[#b8a800]" />
      <TreeCheckbox label={name} />
      <SmallIcon name={icon} />
      <span className={`ml-[5px] whitespace-nowrap ${open ? "" : "pb-[3px]"} ${size}`}>{name}</span>
    </div>
  );
}

function MachineDialog() {
  const nameRef = useRef<HTMLInputElement>(null);
  const [name, setName] = useState("4 - AXIS VMC");

  useEffect(() => {
    nameRef.current?.focus();
    nameRef.current?.select();
  }, []);

  const toolGroups = [
    ["page", "folder", "disk", "disks"],
    ["mill", "head", "spindle", "exclaim"],
    ["tools", "control", "axes"],
    ["unlock"],
  ];

  return (
    <div
      role="dialog"
      aria-label="机床定义管理"
      className="absolute left-[204px] top-[148px] w-[868px] rounded-t-md border border-black bg-linear-to-b from-[#9db7d5] via-[#b9d1ea] via-10% to-[#b4d0e6] px-[7px] pb-[7px] font-['DejaVu_Sans_Condensed','Noto_Sans_CJK_SC',sans-serif] text-[11px] leading-4 text-black shadow-[inset_0_0_0_1px_#c5e6f5]"
    >
      <header className="flex h-[30px] items-center gap-1 pl-0.5">
        <svg viewBox="0 0 15 13" className="h-[13px] w-[15px]">
          <path d="M.5.5h14v12H.5z" fill="#f6f8f9" stroke="#8b99a3" />
          <path d="M2 3h6v8H2z" fill="#3f8480" />
          <path d="M12 2v5" stroke="#2e5a9b" />
        </svg>
        <h2 className="mt-1.5 whitespace-nowrap text-[13px]">
          机床定义管理 - D:\Users\Public\Documents\Shared Mast...\MILL 4 - AXIS VMC MM.mcam-mmd
        </h2>
        <button aria-label="关闭" className="ml-auto mr-0.5 mt-1 flex h-[17px] w-[31px] items-center justify-center rounded-[3px] border border-[#53221e] bg-linear-to-b from-[#e8a394] via-[#c9523e] to-[#cf6a4f]">
          <svg viewBox="0 0 10 8" className="h-2 w-2.5">
            <path d="m1 0 8 8m0-8-8 8" stroke="#5b2a25" strokeWidth="3.5" />
            <path d="m1 0 8 8m0-8-8 8" stroke="#fff" strokeWidth="2" />
          </svg>
        </button>
      </header>

      <div className="bg-[#f0f0f0]">
        <div className="flex h-[39px] items-center border-b border-[#a0a0a0] pl-[11px]">
          {toolGroups.map((group, i) => (
            <div key={i} className="flex items-center gap-[7px]">
              {i > 0 && <span className="ml-[7px] h-[26px] w-px bg-[#8d8d8d]" />}
              {group.map((icon) => (
                <button key={icon} aria-label={icon}>
                  <svg viewBox="0 0 24 24" className="size-6">{dialogIcons[icon]}</svg>
                </button>
              ))}
            </div>
          ))}
        </div>

        <div className="flex gap-[25px] px-[11px]">
          <div className="w-[314px] shrink-0 pt-[7px]">
            <h3 className="pl-3 text-xs leading-4">未使用的组件群组</h3>
            <div className="mt-1 h-[161px] border border-[#828790] bg-white" />

            <fieldset className="mt-[18px] min-w-0 rounded-[3px] border border-[#d7dbde] px-3 pb-[9px]">
              <legend className="-ml-1.5 px-0.5 text-xs leading-4">组件文件</legend>
              <div className="pl-[3px] pt-[9px]">
                <FolderButton label="打开组件文件" />
              </div>
              <p className="mt-[5px] whitespace-nowrap">D:\Users\Public\Document...\All Components mm.mcam-gmd</p>
              <div className="mt-1.5 h-[217px] border border-[#828790] bg-white p-px">
                <ul className="grid h-[197px] grid-flow-col grid-rows-[repeat(11,17px)] auto-cols-[201px] overflow-hidden pl-px pt-px">
                  {components.map(([icon, label]) => (
                    <li key={label} className="flex items-center whitespace-nowrap">
                      <SmallIcon name={icon} className="size-[15px]" />
                      <span className="ml-px">{label}</span>
                    </li>
                  ))}
                </ul>
                <div className="flex h-4 items-center bg-[#f0f0f0] px-1.5 text-[#444]">
                  <Caret className="rotate-90" />
                  <div className="ml-[7px] flex h-[15px] w-[34px] items-center justify-center gap-0.5 rounded-[2px] border border-[#979797] bg-linear-to-b from-[#f3f3f3] to-[#cfcfcf]">
                    <span className="h-1.5 w-px bg-[#555]" />
                    <span className="h-1.5 w-px bg-[#555]" />
                    <span className="h-1.5 w-px bg-[#555]" />
                  </div>
                  <Caret className="ml-auto -rotate-90" />
                </div>
              </div>
            </fieldset>
          </div>

          <div className="w-[492px] shrink-0 pt-[17px]">
            <div className="flex items-center">
              <label htmlFor="description" className="w-[108px] text-xs">说明:</label>
              <input
                id="description"
                ref={nameRef}
                value={name}
                onChange={(e) => setName(e.target.value)}
                className="h-[23px] w-[381px] border border-[#b5cfe7] border-t-[#3d7bad] bg-white px-[3px] pb-1 outline-none selection:bg-[#3399ff] selection:text-white"
              />
            </div>

            <fieldset className="mt-[5px] min-w-0 rounded-[3px] border border-[#d7dbde] px-2.5 pb-2">
              <legend className="-ml-[5px] px-0.5 text-xs leading-4">控制器定义</legend>
              <div className="flex items-center gap-2 pt-[7px]">
                <FolderButton label="打开控制器定义" />
                <span className="whitespace-nowrap">D:\Users\Public\Documents\Shared Mastercam 2...\GENERIC FANUC 4X MILL.mcam-control</span>
              </div>

              <fieldset className="mt-1.5 min-w-0 rounded-[3px] border border-[#d7dbde] px-2 pb-1">
                <legend className="-ml-[3px] px-0.5 text-xs leading-4">后处理</legend>
                <div className="flex gap-[7px] whitespace-nowrap pl-2.5 pt-[3px]">
                  <span className="text-xs leading-4">文件夹:</span>
                  <span>D:\Users\Public\Documents\Shared Mastercam 2021\MILL\POSTS</span>
                </div>
                <div className="ml-[37px] mt-2 grid w-[375px] items-center">
                  <select aria-label="后处理文件" className="col-start-1 row-start-1 h-[22px] appearance-none rounded-[3px] border border-[#707070] bg-linear-to-b from-[#f2f2f2] via-[#ebebeb] to-[#cfcfcf] px-[3px]">
                    <option>GENERIC FANUC 4X MILL.pst</option>
                  </select>
                  <svg viewBox="0 0 8 4" className="pointer-events-none col-start-1 row-start-1 mr-1 h-1 w-2 justify-self-end">
                    <path d="M0 0h8L4 4z" />
                  </svg>
                </div>
              </fieldset>
            </fieldset>

            <h3 className="mt-[10px] text-xs leading-4">机床配置</h3>
            <div className="mt-[5px] h-[301px] border border-[#828790] bg-white pl-2 pt-px">
              <TreeNode icon="base" name="Machine Base" open />
              <div className="ml-[23px] w-fit border-l border-dotted border-black">
                <div className="-ml-[5px]">
                  {machineGroups.map((group) => (
                    <TreeNode key={group.name} icon={group.icon} name={group.name} size={group.size} />
                  ))}
                </div>
              </div>
            </div>
          </div>
        </div>

        <div className="flex h-[51px] items-start justify-end gap-2 pr-[11px] pt-2.5">
          <button aria-label="确定" className="flex h-7 w-[52px] items-center justify-center rounded-[3px] border border-[#3c7fb1] bg-linear-to-b from-[#f3f3f3] to-[#d0d0d0] shadow-[inset_0_0_0_1px_#55cdf0]">
            <svg viewBox="0 0 18 20" className="h-5 w-[18px]">
              <path d="m1 11 3-2 3 5Q10 6 16 1l1 1Q11 9 8 19H6z" fill="#4cc42b" stroke="#236c17" />
            </svg>
          </button>
          <button aria-label="取消" className="flex h-7 w-[52px] items-center justify-center rounded-[3px] border border-[#707070] bg-linear-to-b from-[#f3f3f3] to-[#d0d0d0]">
            <svg viewBox="0 0 20 20" className="size-5">
              <path d="m2 4 4-3 4 5 4-5 4 3-5 6 5 6-4 3-4-5-4 5-4-3 5-6z" fill="#f03c12" stroke="#a82108" />
            </svg>
          </button>
          <button aria-label="帮助主题" className="flex h-7 w-[52px] items-center justify-center rounded-[3px] border border-[#707070] bg-linear-to-b from-[#f3f3f3] to-[#d0d0d0]">
            <svg viewBox="0 0 16 20" className="h-5 w-4" fill="none">
              <path d="M3 6q0-4 5-4t5 4q0 3-3 4t-2 4" stroke="#3b3f48" strokeWidth="4" />
              <path d="M3 6q0-4 5-4t5 4q0 3-3 4t-2 4" stroke="#c4c8d2" strokeWidth="2" />
              <circle cx="8" cy="17.5" r="2" fill="#c4c8d2" stroke="#3b3f48" />
            </svg>
          </button>
        </div>
      </div>

      <svg viewBox="0 0 9 9" className="absolute bottom-2 right-2 size-[9px]" fill="#b4b4b4">
        <path d="M7 0h2v2H7zM7 3.5h2v2H7zM7 7h2v2H7zM3.5 3.5h2v2h-2zM3.5 7h2v2h-2zM0 7h2v2H0z" />
      </svg>
    </div>
  );
}

export default function App() {
  return (
    <div className="relative flex h-screen flex-col overflow-hidden bg-white font-['Noto_Sans','Noto_Sans_CJK_SC',sans-serif]">
      <TitleBar />
      <TabRow />
      <Ribbon />
      <div className="flex min-h-0 flex-1">
        <ToolpathPanel />
        <Viewport />
      </div>
      <StatusBar />

      <div className="absolute right-[176px] top-[19px] whitespace-nowrap font-['Liberation_Serif','Noto_Sans_CJK_SC',serif] text-xl leading-6 text-[#d8201c]">
        淘宝店铺我淘我乐116 QQ86116902
      </div>

      <MachineDialog />

      <svg viewBox="0 0 12 20" className="pointer-events-none absolute left-[404px] top-[368px] h-5 w-3">
        <path d="M.5.5v16l4-4 2.5 6.5 2.5-1L7 11.5h5z" fill="#fff" stroke="#111" />
      </svg>
    </div>
  );
}
